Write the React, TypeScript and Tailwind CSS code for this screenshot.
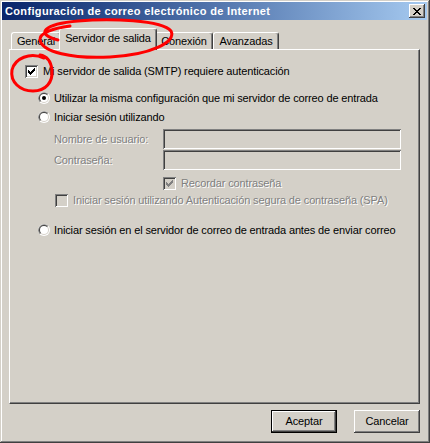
import type { ReactNode } from "react";

const raised =
  "shadow-[inset_-1px_-1px_#404040,inset_1px_1px_#ffffff,inset_-2px_-2px_#808080,inset_2px_2px_#d4d0c8]";
const sunken =
  "shadow-[inset_1px_1px_#808080,inset_-1px_-1px_#ffffff,inset_2px_2px_#404040,inset_-2px_-2px_#d4d0c8]";
const disabledText = "text-[#808080] [text-shadow:1px_1px_0_#ffffff]";

function CheckBox({ checked, disabled }: { checked?: boolean; disabled?: boolean }) {
  return (
    <span
      className={`flex h-[13px] w-[13px] shrink-0 items-center justify-center ${sunken} ${
        disabled ? "bg-[#d4d0c8]" : "bg-white"
      }`}
    >
      {checked && (
        <svg width="7" height="7" viewBox="0 0 7 7" fill={disabled ? "#808080" : "#000"}>
          <path d="M0 2h1v3H0zM1 3h1v3H1zM2 4h1v3H2zM3 3h1v3H3zM4 2h1v3H4zM5 1h1v3H5zM6 0h1v3H6z" />
        </svg>
      )}
    </span>
  );
}

function Radio({ checked }: { checked?: boolean }) {
  return (
    <svg width="12" height="12" viewBox="0 0 12 12" className="shrink-0">
      <circle cx="6" cy="6" r="6" fill="#ffffff" />
      <path d="M1.76 10.24A6 6 0 0 1 10.24 1.76Z" fill="#808080" />
      <circle cx="6" cy="6" r="5" fill="#d4d0c8" />
      <path d="M2.46 9.54A5 5 0 0 1 9.54 2.46Z" fill="#404040" />
      <circle cx="6" cy="6" r="4" fill="#ffffff" />
      {checked && <circle cx="6" cy="6" r="2" fill="#000000" />}
    </svg>
  );
}

function Tab({ label, width, active }: { label: string; width: string; active?: boolean }) {
  return (
    <div
      className={`flex shrink-0 justify-center rounded-t-[3px] border-l border-t border-r border-l-white border-t-white border-r-[#404040] bg-[#d4d0c8] shadow-[inset_-1px_0_#808080] ${width} ${
        active ? "relative z-10 -mx-[2px] -mb-[1px] h-[22px] pt-[3px]" : "h-[17px] pt-[2px]"
      }`}
    >
      {label}
    </div>
  );
}

function Field({ label }: { label: string }) {
  return (
    <div className="flex h-[20px] items-center">
      <span className={`w-[109px] ${disabledText}`}>{label}</span>
      <div className={`h-[20px] w-[238px] bg-[#d4d0c8] ${sunken}`} />
    </div>
  );
}

function Button({ children, isDefault }: { children: ReactNode; isDefault?: boolean }) {
  return (
    <button
      className={`h-[23px] w-[66px] bg-[#d4d0c8] text-black ${
        isDefault ? "border border-black" : ""
      } ${raised}`}
    >
      {children}
    </button>
  );
}

export default function App() {
  return (
    <div className="relative h-[443px] w-[430px] select-none overflow-hidden bg-[#d4d0c8] pt-[2px] pl-[2px] pr-[3px] font-['Liberation_Sans',Arial,sans-serif] text-[11px] leading-[13px] tracking-[-0.13px] text-black shadow-[inset_-1px_-1px_#404040,inset_1px_1px_#d4d0c8,inset_-2px_-2px_#808080,inset_2px_2px_#ffffff]">
      {/* Title bar */}
      <div className="flex h-[18px] items-center justify-between bg-gradient-to-r from-[#0a246a] to-[#a6caf0] pl-[3px] pr-[2px]">
        <span className="text-[11px] font-bold tracking-[0.35px] text-white">
          Configuración de correo electrónico de Internet
        </span>
        <div className={`flex h-[14px] w-[16px] items-center justify-center bg-[#d4d0c8] ${raised}`}>
          <svg width="8" height="7" viewBox="0 0 8 7" fill="#000">
            <path d="M0 0h2v1H0zM6 0h2v1H6zM1 1h2v1H1zM5 1h2v1H5zM2 2h4v1H2zM3 3h2v1H3zM2 4h4v1H2zM1 5h2v1H1zM5 5h2v1H5zM0 6h2v1H0zM6 6h2v1H6z" />
          </svg>
        </div>
      </div>

      <div className="px-[7px] pt-[8px]">
        {/* Tabs */}
        <div className="flex h-[21px] items-end pl-[2px]">
          <Tab label="General" width="w-[50px]" />
          <Tab label="Servidor de salida" width="w-[98px]" active />
          <Tab label="Conexión" width="w-[58px]" />
          <Tab label="Avanzadas" width="w-[66px]" />
        </div>

        {/* Panel */}
        <div className="h-[355px] border-l border-t border-r border-b border-l-white border-t-white border-r-[#404040] border-b-[#404040] pt-[15px] pl-[15px] shadow-[inset_-1px_-1px_#808080]">
          <div className="flex h-[13px] items-center gap-[5px]">
            <CheckBox checked />
            <span>Mi servidor de salida (SMTP) requiere autenticación</span>
          </div>

          <div className="ml-[13px]">
            <div className="mt-[14px] flex h-[12px] items-center gap-[4px]">
              <Radio checked />
              <span>Utilizar la misma configuración que mi servidor de correo de entrada</span>
            </div>
            <div className="mt-[7px] flex h-[12px] items-center gap-[4px]">
              <Radio />
              <span>Iniciar sesión utilizando</span>
            </div>

            <div className="ml-[16px]">
              <div className="mt-[6px]">
                <Field label="Nombre de usuario:" />
              </div>
              <div className="mt-[1px]">
                <Field label="Contraseña:" />
              </div>
              <div className="mt-[7px] ml-[109px] flex h-[13px] items-center gap-[5px]">
                <CheckBox checked disabled />
                <span className={disabledText}>Recordar contraseña</span>
              </div>
              <div className="mt-[4px] ml-[1px] flex h-[13px] items-center gap-[5px]">
                <CheckBox disabled />
                <span className={disabledText}>
                  Iniciar sesión utilizando Autenticación segura de contraseña (SPA)
                </span>
              </div>
            </div>

            <div className="mt-[17px] flex h-[12px] items-center gap-[4px]">
              <Radio />
              <span>Iniciar sesión en el servidor de correo de entrada antes de enviar correo</span>
            </div>
          </div>
        </div>

        {/* Buttons */}
        <div className="mt-[6px] flex justify-end gap-[17px]">
          <Button isDefault>Aceptar</Button>
          <Button>Cancelar</Button>
        </div>
      </div>

      {/* Red annotation marks */}
      <svg
        className="pointer-events-none absolute left-0 top-0 z-20"
        width="430"
        height="443"
        viewBox="0 0 430 443"
        fill="none"
        stroke="#ff0000"
        strokeWidth="3"
        strokeLinecap="round"
      >
        <path d="M58 40C34 34 44 24 78 21C110 18 162 20 171 31C177 42 150 55 110 57C72 59 42 52 40 40C39 33 54 28 70 26" />
        <path d="M44 58C30 52 15 58 12 70C10 82 20 91 33 91C46 91 53 82 52 70C51 62 47 56 40 55" />
      </svg>
    </div>
  );
}
